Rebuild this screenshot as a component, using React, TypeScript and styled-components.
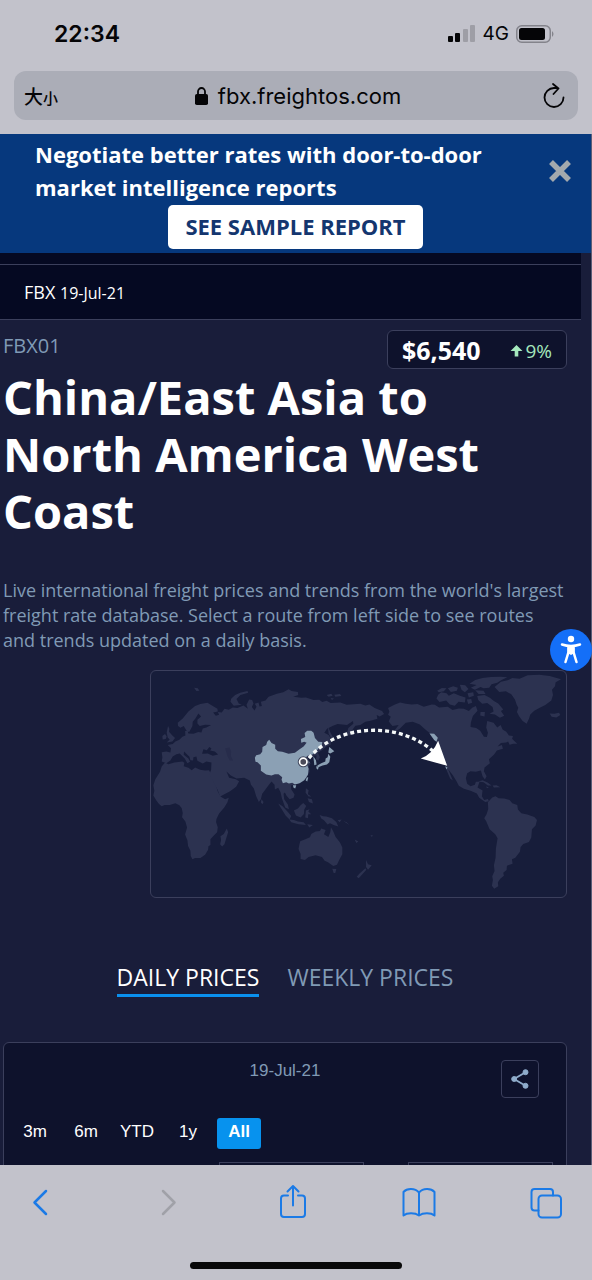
import React from "react";
import styled, { createGlobalStyle } from "styled-components";

const GlobalStyle = createGlobalStyle`
  *, *::before, *::after { box-sizing: border-box; }
  body { margin: 0; background: #191d3a; }
  button, input { font: inherit; color: inherit; }
  button { border: 0; padding: 0; background: none; cursor: pointer; }
  h1, h2, p { margin: 0; }
  svg { display: block; }
`;

const colors = {
  chrome: "#c2c2cb",
  field: "#abadb7",
  banner: "#06387d",
  page: "#191d3a",
  deep: "#050922",
  card: "#0e122c",
  map: "#171d3a",
  land: "#2c3250",
  line: "#3b3f5c",
  muted: "#809ab5",
  link: "#1b7ae6",
};

const system = `Inter, "Liberation Sans", "Noto Sans CJK SC", sans-serif`;
const body = `"Open Sans", "Noto Sans", sans-serif`;
const arial = `"Liberation Sans", Arial, sans-serif`;

const Screen = styled.div`
  position: relative;
  display: flex;
  flex-direction: column;
  height: 100vh;
  background: ${colors.page};
  font-family: ${body};
  color: #fff;
`;

const BrowserTop = styled.header`
  flex: none;
  background: ${colors.chrome};
  color: #050507;
  font-family: ${system};
  padding: 0 14px 14px;
`;

const StatusBar = styled.div`
  display: flex;
  align-items: center;
  justify-content: space-between;
  height: 71px;
  padding: 0 24px 4px 40px;
`;

const Clock = styled.time`
  font-size: 23px;
  font-weight: 600;
`;

const StatusIcons = styled.div`
  display: flex;
  align-items: center;
  gap: 7px;
  font-size: 19px;
`;

const AddressBar = styled.div`
  display: grid;
  grid-template-columns: 52px 1fr 48px;
  align-items: center;
  height: 49px;
  border-radius: 12px;
  background: ${colors.field};
`;

const TextSizeButton = styled.button`
  display: flex;
  align-items: baseline;
  padding-left: 10px;
  font-size: 19px;
  font-weight: 500;
  small { font-size: 15px; }
`;

const Address = styled.button`
  display: flex;
  align-items: center;
  justify-content: center;
  gap: 10px;
  font-size: 22px;
`;

const ReloadButton = styled.button`
  display: flex;
  justify-content: center;
`;

const Page = styled.main`
  flex: 1;
  min-height: 0;
  overflow-y: auto;
  scrollbar-width: none;
  border-right: 1px solid #5b5e78;
`;

const Banner = styled.section`
  position: sticky;
  top: 0;
  z-index: 2;
  display: grid;
  grid-template-columns: 1fr 28px;
  padding: 4px 17px 4px 35px;
  background: ${colors.banner};
`;

const BannerTitle = styled.h2`
  max-width: 480px;
  font-size: 22px;
  line-height: 33px;
  font-weight: 700;
`;

const CloseButton = styled.button`
  align-self: center;
  justify-self: center;
`;

const SampleLink = styled.a`
  grid-column: 1 / -1;
  justify-self: center;
  margin: 1px 18px 0 0;
  padding: 0 17px 1px;
  border-radius: 5px;
  background: #fff;
  color: #14366f;
  font-size: 22px;
  line-height: 43px;
  font-weight: 700;
  text-decoration: none;
`;

const Ticker = styled.section`
  margin-right: 10px;
  padding-top: 11px;
  background: ${colors.deep};
`;

const TickerLine = styled.p`
  padding: 1px 24px 0;
  border: solid ${colors.line};
  border-width: 1px 0;
  font-size: 18px;
  line-height: 52px;
  font-weight: 500;
  small { font-size: 16px; }
`;

const Content = styled.div`
  padding: 10px 24px 0 3px;
`;

const RouteHead = styled.div`
  display: flex;
  justify-content: space-between;
`;

const RouteCode = styled.p`
  color: ${colors.muted};
  font-size: 20px;
  line-height: 32px;
  font-weight: 400;
`;

const PriceBox = styled.div`
  display: flex;
  align-items: center;
  justify-content: space-between;
  width: 180px;
  height: 39px;
  padding: 0 14px;
  border: 1px solid ${colors.line};
  border-radius: 6px;
  background: ${colors.card};
`;

const Price = styled.strong`
  font-size: 25px;
  font-weight: 700;
`;

const Change = styled.span`
  display: flex;
  align-items: center;
  gap: 2px;
  padding-top: 2px;
  color: #a5e8bd;
  font-size: 19px;
`;

const RouteTitle = styled.h1`
  font-size: 47px;
  line-height: 57px;
  font-weight: 700;
`;

const Intro = styled.p`
  margin-top: 38px;
  color: ${colors.muted};
  font-size: 18px;
  line-height: 25px;
  font-weight: 400;
`;

const MapCard = styled.figure`
  width: 74%;
  margin: 17px 0 0 auto;
  border: 1px solid ${colors.line};
  border-radius: 6px;
  background: ${colors.map};
  overflow: hidden;
  svg { width: 100%; height: auto; }
`;

const Tabs = styled.div`
  display: flex;
  justify-content: center;
  gap: 28px;
  margin-top: 62px;
`;

const Tab = styled.button<{ $active?: boolean }>`
  border-bottom: 3px solid ${(p) => (p.$active ? "#0a90ee" : "transparent")};
  color: ${(p) => (p.$active ? "#fff" : colors.muted)};
  font-size: 23px;
  line-height: 34px;
`;

const ChartCard = styled.section`
  margin-top: 45px;
  border: 1px solid ${colors.line};
  border-radius: 6px;
  background: ${colors.card};
  font-family: ${arial};
`;

const ChartHead = styled.div`
  display: grid;
  grid-template-columns: 1fr auto 1fr;
  padding: 17px 27px 0;
`;

const ChartDate = styled.p`
  grid-column: 2;
  color: ${colors.muted};
  font-size: 17px;
  line-height: 22px;
`;

const ShareButton = styled.button`
  justify-self: end;
  display: grid;
  place-items: center;
  width: 38px;
  height: 38px;
  border: 1px solid ${colors.line};
  border-radius: 4px;
`;

const Ranges = styled.div`
  display: flex;
  gap: 7px;
  margin-top: 20px;
  padding-left: 9px;
`;

const Range = styled.button<{ $active?: boolean }>`
  min-width: 44px;
  height: 31px;
  padding: 0 4px 2px;
  border-radius: 3px;
  background: ${(p) => (p.$active ? "#0792ee" : "none")};
  font-size: 17px;
  font-weight: ${(p) => (p.$active ? 700 : 400)};
`;

const DateRange = styled.div`
  display: flex;
  justify-content: flex-end;
  gap: 44px;
  padding: 13px 13px 24px;
`;

const DateField = styled.input`
  width: 145px;
  height: 34px;
  border: 1px solid ${colors.line};
  background: none;
  text-align: center;
`;

const AccessibilityButton = styled.button`
  position: absolute;
  right: 0;
  top: 629px;
  z-index: 3;
`;

const BrowserBottom = styled.nav`
  flex: none;
  display: flex;
  flex-direction: column;
  align-items: center;
  gap: 41px;
  padding: 18px 28px 11px 22px;
  background: ${colors.chrome};
`;

const ToolRow = styled.div`
  display: flex;
  justify-content: space-between;
  width: 100%;
`;

const HomeIndicator = styled.div`
  width: 212px;
  height: 7px;
  margin-left: 6px;
  border-radius: 4px;
  background: #09090a;
`;

const Tool = ({ label, disabled, children }: { label: string; disabled?: boolean; children: React.ReactNode }) => (
  <button aria-label={label} disabled={disabled}>
    <svg width="38" height="38" viewBox="0 0 38 38" fill="none" stroke={disabled ? "#a0a1a8" : colors.link} strokeWidth="2" strokeLinecap="round" strokeLinejoin="round">
      {children}
    </svg>
  </button>
);

const WorldMap = () => (
  <svg viewBox="18 19 1244 676" role="img" aria-label="Route from China to the North America West Coast">
    <g fill={colors.land}>
      <path d="M60 293L70 298L88 293L112 290L118 294L116 304L130 309L140 316L150 308L165 315L180 317L192 316L198 330L205 346L213 362L218 380L227 396L240 403L251 399L247 412L238 427L222 446L214 462L213 472L218 487L216 502L204 514L196 523L196 540L190 544L189 554L180 569L166 579L150 579L142 583L137 573L136 557L129 543L127 526L120 509L126 488L121 470L111 457L113 444L110 430L103 421L91 415L74 420L59 420L50 424L42 417L34 407L25 392L28 378L25 361L31 343L45 321L50 305Z" />
      <path d="M245 491L249 502L244 518L238 538L231 545L225 538L228 525L226 514L236 507Z" />
      <path d="M50 290L52 277L50 262L64 260L76 263L78 250L68 241L83 238L91 230L103 225L112 216L121 212L120 199L126 194L130 206L145 207L160 202L169 203L173 191L184 188L198 181L180 180L164 184L157 176L157 165L168 155L160 146L151 161L143 171L142 184L133 201L125 199L116 184L106 189L99 184L98 174L113 161L130 140L150 124L166 118L187 114L203 124L217 132L218 140L204 143L212 153L222 150L218 142L230 143L238 132L251 135L263 128L277 130L295 122L308 132L304 120L312 104L321 106L325 116L320 127L328 137L334 126L329 117L340 113L343 125L350 124L347 111L361 107L370 96L395 87L414 83L430 74L439 79L458 82L459 91L444 96L468 99L482 98L505 106L522 105L531 112L544 108L556 115L585 113L604 120L615 119L645 117L660 122L672 119L688 130L710 139L716 148L703 155L694 151L696 162L676 168L660 171L645 181L630 183L623 193L611 214L605 204L609 190L624 177L623 169L605 181L577 178L563 183L545 192L537 204L550 211L558 224L556 240L543 245L532 255L518 264L524 277L519 288L512 283L514 272L504 272L492 278L485 276L487 286L496 295L491 305L493 321L484 339L464 354L448 359L437 362L438 373L448 389L445 399L433 403L424 393L419 383L415 387L417 403L428 419L431 433L420 428L410 400L406 382L399 369L389 374L388 360L379 350L370 361L358 378L351 387L347 403L341 411L333 394L326 371L317 359L314 347L297 339L274 341L257 332L244 320L252 339L272 343L282 349L273 366L255 379L225 395L217 374L201 344L193 328L198 315L199 293L184 290L173 296L157 288L154 275L145 277L144 287L136 286L133 276L117 260L116 270L130 281L135 291L127 295L119 281L104 266L94 268L83 275L76 287L64 295Z" />
      <path d="M69 184L73 192L72 201L82 212L90 220L82 230L65 233L74 224L68 218L65 203ZM60 208L65 215L62 223L53 224L52 214Z" />
      <path d="M266 123L256 111L258 102L270 91L285 84L307 79L309 84L286 91L274 103L281 116L290 120Z" />
      <path d="M147 69L158 71L163 78L154 79ZM418 83L430 76L434 83ZM544 91L558 87L562 93L550 96ZM567 90L584 88L588 94L570 96ZM556 100L566 101L560 106Z" />
      <path d="M548 185L556 205L566 222L560 224L550 207Z" />
      <path d="M349 403L355 411L352 418L347 413ZM399 416L411 423L428 441L438 453L433 464L421 452ZM432 464L446 465L458 470L475 472L482 480L460 478L438 472ZM486 478L503 480L492 488Z" />
      <path d="M446 437L458 431L466 421L474 414L483 423L477 434L476 447L466 458L452 452ZM482 437L493 433L489 440L498 448L489 448L488 460L480 458ZM482 370L490 376L488 388L498 395L490 395L481 384ZM487 400L500 403L503 416L491 411Z" />
      <path d="M523 450L534 454L543 455L560 460L573 471L579 485L565 480L554 475L547 479L536 466L528 461ZM577 466L589 464L583 472ZM594 468L604 472L612 480Z" />
      <path d="M462 540L465 529L482 522L494 517L498 507L511 500L524 498L528 491L541 495L536 508L549 516L555 502L557 487L564 500L571 516L584 533L591 548L591 568L582 584L575 599L564 603L548 592L538 587L530 576L511 571L490 576L479 585L466 582L466 567L460 552Z" />
      <path d="M561 611L573 612L570 624L565 624ZM628 524L639 530L633 534ZM675 512L682 510L680 516Z" />
      <path d="M662 585L668 598L679 601L668 614L662 606ZM660 610L663 614L651 628L640 640L634 635L642 626Z" />
      <g transform="translate(615 0)">
        <path d="M115 170L121 156L113 150L117 141L113 130L132 120L149 113L166 117L184 119L201 118L220 126L244 119L253 120L266 128L292 126L306 136L325 131L340 132L355 139L365 129L376 124L381 138L367 154L361 173L360 187L377 190L389 198L400 216L409 217L412 204L407 188L410 169L429 174L440 188L450 181L456 194L467 201L475 212L487 214L484 224L467 233L451 235L441 245L454 241L457 252L439 257L430 270L415 283L418 295L402 308L400 319L408 334L403 344L396 334L391 317L376 321L360 319L350 325L346 340L350 357L360 364L373 360L376 351L387 351L381 368L396 377L394 394L401 405L412 402L415 409L404 411L386 399L379 386L360 378L340 372L325 363L318 349L307 331L293 313L303 337L307 347L299 341L289 318L285 296L276 280L269 257L261 241L255 224L240 207L222 192L208 179L187 171L166 174L148 192L127 205L138 190L145 181L126 184Z" />
        <path d="M470 224L485 223L500 237L488 237L477 240Z" />
        <path d="M258 101L263 90L272 83L288 86L295 93L310 86L328 93L345 98L343 113L324 111L313 123L298 119L287 107L267 112ZM260 78L274 70L288 71L280 80L265 83ZM292 71L308 65L322 69L319 78L301 82ZM328 60L344 62L354 73L343 83L333 75ZM351 86L368 83L370 93L355 98ZM349 104L362 103L365 114L353 118ZM357 57L374 46L396 40L421 37L449 36L470 38L453 46L440 54L423 59L416 69L399 71L390 67L373 75L361 69L378 61ZM374 77L399 78L405 88L384 88ZM380 94L402 91L418 99L430 109L443 116L458 134L451 139L461 153L448 159L433 149L417 147L429 140L426 127L410 115L395 117L383 106ZM390 142L403 142L402 155L389 152Z" />
        <path d="M432 67L451 51L471 47L485 40L507 42L531 32L566 30L597 34L631 44L615 53L613 65L604 75L607 91L602 107L584 121L566 130L551 138L539 149L535 162L528 177L516 169L506 155L499 142L503 129L498 119L493 104L482 89L466 80L446 82Z" />
        <path d="M597 146L611 147L625 144L629 151L617 158L603 156Z" />
        <path d="M383 350L396 346L411 353L423 362L412 362L399 352ZM426 362L438 361L449 367L430 368ZM406 365L415 367L410 370Z" />
        <path d="M412 412L425 398L435 394L444 400L461 401L477 405L485 415L500 420L502 434L512 445L530 449L551 456L559 465L555 482L544 493L542 518L535 531L518 537L510 546L508 560L494 578L484 583L486 596L469 602L468 615L458 623L460 632L449 641L442 652L443 664L431 671L424 662L427 645L425 634L432 618L430 601L435 578L436 551L441 520L434 508L417 493L407 469L401 460L408 448L413 432Z" />
      </g>
    </g>
    <g fill={colors.map}>
      <path d="M171 267L175 253L185 256L193 247L199 251L195 257L209 260L219 269L203 273L188 266Z" />
      <path d="M240 250L253 248L258 261L257 274L264 287L254 287L247 274Z" opacity=".25" />
    </g>
    <g fill="#8ba0b4">
      <path d="M329 279L333 271L345 268L351 261L352 247L363 241L366 231L372 225L379 235L390 240L390 252L398 259L411 261L430 267L449 264L462 254L475 245L484 234L477 231L468 234L467 223L480 217L478 205L486 198L498 198L505 204L509 220L519 231L531 232L529 245L519 251L511 263L500 270L487 273L478 281L487 286L494 292L485 298L490 312L488 330L477 346L463 355L449 359L441 354L431 356L423 352L413 355L409 345L411 337L400 328L389 328L379 332L363 329L347 318L347 302L337 292L331 291Z" />
      <path d="M443 361L453 361L450 371L445 369ZM485 337L489 338L486 350L481 346Z" />
      <path d="M552 247L567 259L555 266L549 263ZM549 267L555 276L552 292L545 299L532 302L519 307L516 302L528 295L540 290L541 281L547 277ZM514 303L520 307L518 315L513 310ZM504 274L512 286L514 299L507 301L506 290Z" />
      <path d="M852 206L866 207L877 219L873 231L866 226ZM899 304L906 308L903 314Z" />
    </g>
    <path d="M491 280C581 172 770 171 868 264" fill="none" stroke="#f4f8f8" strokeWidth="10" strokeDasharray="12 9" />
    <path d="M878 228L905 303L826 281Q862 268 878 228Z" fill="#fff" />
    <circle cx="474" cy="291" r="13" fill="#4a4a5a" stroke="#41485e" strokeWidth="7" />
    <circle cx="474" cy="291" r="11" fill="#4b4b59" stroke="#fff" strokeWidth="5" />
  </svg>
);

const ranges = ["3m", "6m", "YTD", "1y", "All"];

export default function App() {
  return (
    <Screen>
      <GlobalStyle />
      <BrowserTop>
        <StatusBar>
          <Clock>22:34</Clock>
          <StatusIcons>
            <svg width="28" height="18" viewBox="0 0 28 18" aria-hidden="true">
              <rect x="0" y="11" width="5" height="6" rx="1" fill="#050507" />
              <rect x="7" y="8" width="5" height="9" rx="1" fill="#050507" />
              <rect x="15" y="4" width="5" height="13" rx="1" fill="#9e9ea6" />
              <rect x="22" y="0" width="5" height="17" rx="1" fill="#9e9ea6" />
            </svg>
            <span>4G</span>
            <svg width="38" height="18" viewBox="0 0 38 18" aria-hidden="true">
              <rect x=".75" y=".75" width="33.5" height="16.5" rx="5" fill="none" stroke="#83838b" strokeWidth="1.5" />
              <rect x="3" y="3" width="26" height="12" rx="2.5" fill="#050507" />
              <path d="M36 6Q39 9 36 12Z" fill="#83838b" />
            </svg>
          </StatusIcons>
        </StatusBar>
        <AddressBar>
          <TextSizeButton aria-label="Page settings">大<small>小</small></TextSizeButton>
          <Address>
            <svg width="13" height="19" viewBox="0 0 13 19" aria-hidden="true">
              <path d="M3 9V5.5a3.5 3.5 0 0 1 7 0V9" fill="none" stroke="#050507" strokeWidth="1.8" />
              <rect y="8" width="13" height="11" rx="1.8" fill="#050507" />
            </svg>
            fbx.freightos.com
          </Address>
          <ReloadButton aria-label="Reload">
            <svg width="22" height="26" viewBox="0 0 22 26" fill="none" stroke="#050507" strokeWidth="1.8" strokeLinecap="round" strokeLinejoin="round">
              <path d="M20.5 14.5A9.5 9.5 0 1 1 11 5H15M10 1L15.500 5.500L10.500 11" />
            </svg>
          </ReloadButton>
        </AddressBar>
      </BrowserTop>

      <Page>
        <Banner>
          <BannerTitle>Negotiate better rates with door-to-door market intelligence reports</BannerTitle>
          <CloseButton aria-label="Close">
            <svg width="24" height="24" viewBox="0 0 24 24" stroke="#a3a9ad" strokeWidth="5.500">
              <path d="M3 3L21 21M21 3L3 21" />
            </svg>
          </CloseButton>
          <SampleLink href="#report">SEE SAMPLE REPORT</SampleLink>
        </Banner>
        <Ticker>
          <TickerLine>FBX <small>19-Jul-21</small></TickerLine>
        </Ticker>
        <Content>
          <RouteHead>
            <RouteCode>FBX01</RouteCode>
            <PriceBox>
              <Price>$6,540</Price>
              <Change>
                <svg width="13" height="13" viewBox="0 0 13 13" fill="currentColor" aria-hidden="true">
                  <path d="M6.500 1L12.500 7H8.300V12.500H4.700V7H.5Z" />
                </svg>
                9%
              </Change>
            </PriceBox>
          </RouteHead>
          <RouteTitle>China/East Asia to North America West Coast</RouteTitle>
          <Intro>
            Live international freight prices and trends from the world's largest freight rate database. Select a route
            from left side to see routes and trends updated on a daily basis.
          </Intro>
          <MapCard>
            <WorldMap />
          </MapCard>
          <Tabs role="tablist">
            <Tab role="tab" aria-selected="true" $active>DAILY PRICES</Tab>
            <Tab role="tab" aria-selected="false">WEEKLY PRICES</Tab>
          </Tabs>
          <ChartCard>
            <ChartHead>
              <ChartDate>19-Jul-21</ChartDate>
              <ShareButton aria-label="Share chart">
                <svg width="18" height="20" viewBox="0 0 18 20" fill="#8faccb" stroke="#8faccb">
                  <path d="M15 3L3 10L15 17" fill="none" strokeWidth="1.800" />
                  <circle cx="14.500" cy="3.200" r="2.500" />
                  <circle cx="3.200" cy="10" r="2.500" />
                  <circle cx="14.500" cy="16.800" r="2.500" />
                </svg>
              </ShareButton>
            </ChartHead>
            <Ranges>
              {ranges.map((r) => (
                <Range key={r} $active={r === "All"}>{r}</Range>
              ))}
            </Ranges>
            <DateRange>
              <DateField aria-label="From date" />
              <DateField aria-label="To date" />
            </DateRange>
          </ChartCard>
        </Content>
      </Page>

      <AccessibilityButton aria-label="Accessibility options">
        <svg width="42" height="42" viewBox="0 0 42 42">
          <circle cx="21" cy="21" r="21" fill="#146ff8" />
          <circle cx="21" cy="10" r="3.200" fill="#fff" />
          <path d="M12 15.500Q21 18.500 30 15.500M18.500 17V23L15.500 33M23.500 17V23L26.500 33" fill="none" stroke="#fff" strokeWidth="2.500" strokeLinecap="round" />
          <path d="M17.500 16.500H24.500V24L21 26L17.500 24Z" fill="#fff" />
        </svg>
      </AccessibilityButton>

      <BrowserBottom>
        <ToolRow>
          <Tool label="Back"><path d="M24 8L12.500 19.500L24 31" strokeWidth="2.500" /></Tool>
          <Tool label="Forward" disabled><path d="M15 8L26.500 19.500L15 31" strokeWidth="2.500" /></Tool>
          <Tool label="Share">
            <path d="M14 12.500H10Q7 12.500 7 15.500V31Q7 34 10 34H28Q31 34 31 31V15.500Q31 12.500 28 12.500H24M19 22.500V3.500M13.500 8.500L19 3L24.500 8.500" />
          </Tool>
          <Tool label="Bookmarks">
            <path d="M19 9.500C15 5 7 5 3.500 9V32.500C7 29.500 15 29.500 19 32.500C23 29.500 31 29.500 34.500 32.500V9C31 5 23 5 19 9.500V32.500" />
          </Tool>
          <Tool label="Tabs">
            <rect x="12.500" y="12.500" width="22.500" height="22" rx="3.500" />
            <path d="M12.500 27.500H8.500Q5.500 27.500 5.500 24.500V9Q5.500 6 8.500 6H24Q27 6 27 9V12.500" />
          </Tool>
        </ToolRow>
        <HomeIndicator />
      </BrowserBottom>
    </Screen>
  );
}
